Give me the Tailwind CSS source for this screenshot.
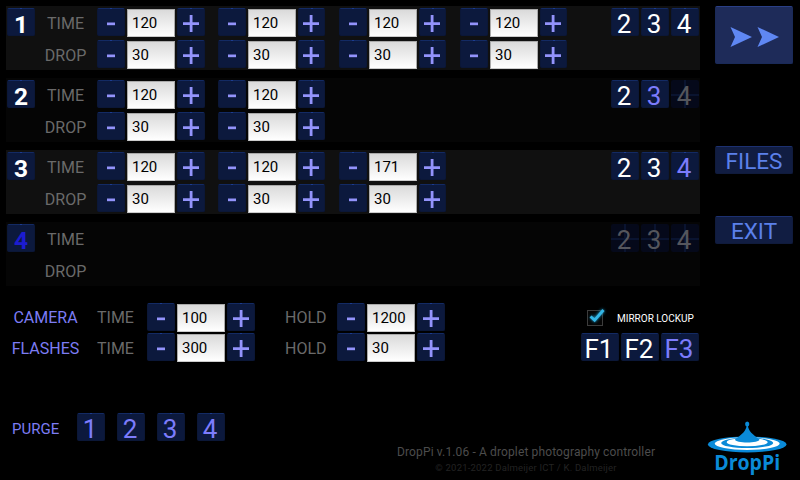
<!DOCTYPE html>
<html lang="en">
<head>
<meta charset="utf-8">
<title>DropPi</title>
<script src="https://cdn.jsdelivr.net/npm/@tailwindcss/browser@4"></script>
</head>
<body class="w-[800px] h-[480px] overflow-hidden bg-black font-[Roboto,sans-serif]">
<div class="flex w-[800px] h-[480px] pt-[6px] pl-[6px]">
  <main class="w-[694px] shrink-0">
    <div id="valves" class="flex flex-col gap-2"></div>

    <section class="mt-[17px] flex h-[58px]">
      <div class="w-[141px] shrink-0 pt-px text-[16px] leading-[28px] text-[#6a6a6a]">
        <div class="flex h-[30px]"><span class="w-[79px] text-center text-[#7c7cf4]">CAMERA</span><span class="w-[62px] pl-[12px]">TIME</span></div>
        <div class="flex h-[30px] pt-px"><span class="w-[79px] text-center text-[#7c7cf4]">FLASHES</span><span class="w-[62px] pl-[12px]">TIME</span></div>
      </div>
      <div id="times" class="flex flex-col gap-[2px]"></div>
      <div class="w-[82px] shrink-0 pt-px pl-[30px] text-[16px] leading-[28px] text-[#6a6a6a]">
        <div class="h-[30px]">HOLD</div>
        <div class="h-[30px] pt-px">HOLD</div>
      </div>
      <div id="holds" class="flex flex-col gap-[2px]"></div>
      <div class="ml-auto w-[119px]">
        <label class="flex h-[30px] items-center pl-[4px]">
          <svg class="w-[24px] h-[24px] shrink-0" viewBox="0 0 24 24">
            <defs><filter id="glow" x="-50%" y="-50%" width="200%" height="200%"><feGaussianBlur stdDeviation="1.6"/></filter></defs>
            <rect x="2.5" y="4.5" width="15" height="15" fill="#050505" stroke="#3c3c3c"/>
            <path d="M6 10.5L9.6 14L18.5 4" fill="none" stroke="#1583ad" stroke-width="3.5" filter="url(#glow)"/>
            <path d="M5.500 10.500L9.600 14.200L18.500 4" fill="none" stroke="#33b5e5" stroke-width="2.9"/>
          </svg>
          <span class="ml-[8px] mt-px text-[10px] whitespace-nowrap text-white">MIRROR LOCKUP</span>
        </label>
        <div id="flashes" class="flex gap-[2px]"></div>
      </div>
    </section>

    <section class="mt-[52px] flex h-[28px]">
      <span class="w-[71px] pl-[6px] pt-[2px] text-[15px] leading-[28px] text-[#7c7cf4]">PURGE</span>
      <div id="purge" class="flex gap-[12px]"></div>
    </section>
    <footer class="ml-[391px] mt-[2px] w-[258px] text-center whitespace-nowrap">
      <div class="text-[12px] leading-[18px] tracking-[0.13px] text-[#4c4c4c]">DropPi v.1.06 - A droplet photography controller</div>
      <div class="text-[9.500px] leading-[14px] tracking-[0.2px] text-[#232323]">© 2021-2022 Dalmeijer ICT / K. Dalmeijer</div>
    </footer>
  </main>

  <aside class="ml-[15px] w-[78px] shrink-0 flex flex-col text-[22.5px] text-[#5b80ea]">
    <button class="h-[58px] rounded-[2px] border border-[#1a2a58] border-t-[#2a3f86] bg-[#1e2b59] flex items-center justify-center">
      <svg class="w-[50px] h-[22px] mt-[3px]" viewBox="0 0 50 22" fill="#5f87f2"><path d="M1.500 1L23 11L1.500 21L6 11Z"/><path d="M28.500 1L50 11L28.500 21L33 11Z"/></svg>
    </button>
    <button class="mt-[82px] h-[28px] rounded-[2px] border border-[#101b3c] border-t-[#1c3070] bg-[#111d42] leading-[29px]">FILES</button>
    <button class="mt-[42px] h-[28px] rounded-[2px] border border-[#101b3c] border-t-[#1c3070] bg-[#111d42] leading-[29px]">EXIT</button>
    <svg class="-ml-[8px] mt-[176px] w-[82px] h-[56px] shrink-0" viewBox="0 0 82 56">
      <ellipse cx="40.200" cy="24.400" rx="39.300" ry="8" fill="#0a8ad8"/>
      <ellipse cx="40.200" cy="23.600" rx="32.500" ry="6.300" fill="#fff"/>
      <ellipse cx="40.200" cy="22.900" rx="26" ry="5.200" fill="#0a8ad8"/>
      <ellipse cx="40.200" cy="22.200" rx="20.500" ry="4" fill="#fff"/>
      <path d="M39.600 5h1.300C41 11 46 14.500 52.500 19.500C52.500 23.500 28 23.500 28 19.500C34.500 14.500 39.500 11 39.600 5Z" fill="#0a8ad8"/>
      <ellipse cx="40.200" cy="4" rx="2.100" ry="2.600" fill="#0a8ad8"/>
      <text x="7.200" y="49.800" textLength="66" lengthAdjust="spacingAndGlyphs" class="font-['Open_Sans',sans-serif] font-bold" font-size="21" fill="#0a8ad8">DropPi</text>
    </svg>
  </aside>
</div>
<script>
const keyFace = 'relative flex justify-center h-[28px] shrink-0 rounded-[2px] border border-[#0b1737] border-t-[#132a63] bg-[#0c193d] ';
const spark = '<i class="absolute -top-px left-1/2 -ml-px h-px w-[2px] bg-[#1c3c90]"></i>';
const key = (label, cls) => `<button class="${keyFace}${cls}">${spark}${label}</button>`;
const tones = {
  on: 'w-[28px] pr-[2px] text-[26px] leading-[30px] text-white',
  off: 'w-[28px] pr-[2px] text-[26px] leading-[30px] text-[#7c7cfc]',
};
// Disabled keys show a faint cross behind the digit.
const dimKey = n => `<button class="relative flex justify-center h-[28px] w-[28px] shrink-0 rounded-[2px] bg-[#05091a] pt-px pr-[2px] text-[26px] leading-[30px] text-[#55565c]">
  <i class="absolute left-[13px] top-0 h-[28px] w-[2px] bg-[#0a1430]"></i><i class="absolute left-0 top-[14px] h-[2px] w-[28px] bg-[#0a1430]"></i><span class="relative">${n}</span></button>`;
const minus = '<svg class="mt-[13px] mr-px w-[8px] h-[4px]" viewBox="0 0 8 4"><path d="M0 .5h8v2.700h-8z" fill="#9393fb"/></svg>';
const plus = '<svg class="mt-[6px] w-[16px] h-[17px]" viewBox="0 0 16 17"><path d="M6.700 0h2.800v7.200H16v2.700H9.500V17H6.700V9.900H0V7.200h6.700z" fill="#9393fb"/></svg>';
const stepper = (v, plusSize = 'w-[28px]') => `<div class="flex h-[28px] gap-[2px]">${key(minus, 'w-[28px]')}
  <div class="mt-px h-[28px] w-[48px] border border-[#aaa] border-b-[#ccc] bg-linear-to-b from-[#dadada] to-white pl-[4px] text-[15px] leading-[26px] text-black">${v}</div>
  ${key(plus, plusSize)}</div>`;
const valves = [
  {n: 1, cols: [120, 120, 120, 120], next: ['on', 'on', 'on']},
  {n: 2, cols: [120, 120], next: ['on', 'off', 'dim']},
  {n: 3, cols: [120, 120, 171], next: ['on', 'on', 'off']},
  {n: 4, cols: [], next: ['dim', 'dim', 'dim']},
];
const fill = (id, html) => document.getElementById(id).innerHTML = html;
const column = (v, i) => {
  const size = i ? 'w-[27px] mr-px pr-px' : 'w-[28px]';
  return `<div class="flex flex-col gap-[4px]">${stepper(v, size)}${stepper(30, size)}</div>`;
};
fill('valves', valves.map(v => `
  <section class="flex h-[64px] pt-[2px] px-px ${v.n % 2 ? 'bg-[#101010]' : 'bg-[#050505]'}">
    ${key(v.n, 'w-[28px] text-[24.5px] font-bold leading-[31px] ' + (v.n === 4 ? 'text-[#1c1cd0]' : 'text-white'))}
    <div class="w-[62px] pr-px text-center text-[16px] leading-[32px] text-[#6a6a6a]"><div>TIME</div><div>DROP</div></div>
    <div class="flex gap-[13px]">${v.cols.map(column).join('')}</div>
    <div class="ml-auto flex gap-[2px]">${v.next.map((t, i) => t === 'dim' ? dimKey(i + 2) : key(i + 2, tones[t])).join('')}</div>
  </section>`).join(''));
fill('times', stepper(100) + stepper(300));
fill('holds', stepper(1200) + stepper(30));
fill('flashes', key('F1', 'w-[38px] pr-[2px] text-[26px] leading-[30px] text-white') + key('F2', 'w-[38px] pr-[2px] text-[26px] leading-[30px] text-white') + key('F3', 'w-[38px] pr-[2px] text-[26px] leading-[30px] text-[#7c7cfc]'));
fill('purge', [1, 2, 3, 4].map(n => key(n, tones.off)).join(''));
</script>
</body>
</html>
